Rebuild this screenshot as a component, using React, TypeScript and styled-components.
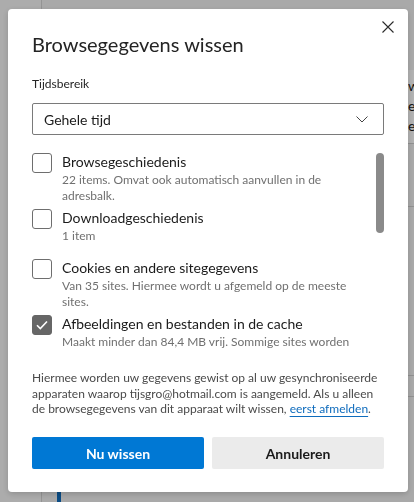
import styled, { createGlobalStyle } from "styled-components";

const GlobalStyle = createGlobalStyle`
  html, body {
    margin: 0;
    padding: 0;
    height: 100%;
    overflow: hidden;
  }
  body {
    font-family: Lato, "Noto Sans", Arial, sans-serif;
    color: #1b1b1b;
  }
`;

/* ---------- dimmed page behind the dialog ---------- */

const Page = styled.div`
  display: flex;
  height: 100vh;
  background: #f3f3f3;
`;

const Sidebar = styled.div`
  width: 41px;
  flex: none;
  background: #f7f7f7;
  border-right: 1px solid #d4d4d4;
`;

const Main = styled.div`
  flex: 1;
  display: flex;
  flex-direction: column;
  padding: 70px 0 0 15px;
`;

// only the start of these lines peeks out to the right of the dialog
const Card = styled.div`
  background: #ffffff;
  border-bottom: 1px solid #d0d0d0;
  padding: 6px 0 7px 351px;
  font-size: 14px;
  line-height: 20px;
  white-space: nowrap;
  color: #1b1b1b;
`;

const PageRow = styled.div<{ $height: number; $accent?: boolean }>`
  height: ${({ $height }) => $height}px;
  flex: none;
  border-bottom: 1px solid #d0d0d0;
  border-left: ${({ $accent }) => ($accent ? "4px solid #0f6cbd" : "none")};
`;

const Progress = styled.div`
  height: 3px;
  margin: 17px 0 0 auto;
  width: 40px;
  background: #0f6cbd;
`;

const Backdrop = styled.div`
  position: fixed;
  inset: 0;
  background: rgba(0, 0, 0, 0.3);
`;

/* ---------- dialog ---------- */

const Dialog = styled.div`
  position: fixed;
  left: 8px;
  top: 9px;
  width: 400px;
  height: 483px;
  box-sizing: border-box;
  padding: 21px 24px 23px;
  background: #ffffff;
  border-radius: 4px;
  box-shadow: 0 2px 6px rgba(0, 0, 0, 0.18);
  display: flex;
  flex-direction: column;
  & > * {
    flex-shrink: 0;
  }
`;

const CloseButton = styled.button`
  position: absolute;
  top: 12px;
  right: 14px;
  width: 12px;
  height: 12px;
  padding: 0;
  border: none;
  background: none;
  display: flex;
  cursor: pointer;
`;

const Title = styled.h1`
  margin: 0;
  font-size: 20px;
  line-height: 28px;
  font-weight: 400;
  color: #242424;
`;

const FieldLabel = styled.div`
  margin-top: 18px;
  font-size: 12px;
  line-height: 16px;
  color: #242424;
`;

const Select = styled.div`
  margin-top: 11px;
  height: 32px;
  box-sizing: border-box;
  border: 1px solid #7a7a7a;
  border-radius: 2px;
  padding: 0 15px 0 11px;
  display: flex;
  align-items: center;
  justify-content: space-between;
  font-size: 14px;
  color: #1b1b1b;
`;

const ListArea = styled.div`
  margin-top: 18px;
  height: 198px;
  display: flex;
  gap: 8px;
`;

const List = styled.div`
  flex: 1;
  overflow: hidden;
  padding-right: 8px;
`;

const ScrollTrack = styled.div`
  width: 8px;
  flex: none;
`;

const ScrollThumb = styled.div`
  height: 80px;
  border-radius: 4px;
  background: #8a8a8a;
`;

const Item = styled.div`
  display: flex;
  gap: 10px;
  min-height: 45px;
  margin-bottom: 5px;
`;

const Box = styled.span<{ $checked?: boolean }>`
  width: 20px;
  height: 20px;
  flex: none;
  box-sizing: border-box;
  border-radius: 3px;
  border: 1px solid ${({ $checked }) => ($checked ? "#666666" : "#6e6e6e")};
  background: ${({ $checked }) => ($checked ? "#666666" : "#ffffff")};
  display: flex;
  align-items: center;
  justify-content: center;
`;

const ItemText = styled.div`
  display: flex;
  flex-direction: column;
`;

const ItemTitle = styled.div`
  font-size: 14px;
  line-height: 18px;
  color: #1b1b1b;
`;

const ItemDesc = styled.div`
  margin-top: 1px;
  font-size: 12px;
  line-height: 16px;
  color: #707070;
`;

const Info = styled.p`
  margin: 19px 0 0;
  font-size: 12px;
  line-height: 15.5px;
  color: #4a4a4a;
  white-space: nowrap;
`;

const Link = styled.a`
  color: #0f6cbd;
  text-decoration: underline;
  text-underline-offset: 3px;
`;

const Actions = styled.div`
  margin-top: auto;
  display: grid;
  grid-template-columns: 1fr 1fr;
  gap: 8px;
`;

const Button = styled.button<{ $primary?: boolean }>`
  height: 32px;
  border: none;
  border-radius: 2px;
  font-family: inherit;
  font-size: 14px;
  font-weight: 700;
  background: ${({ $primary }) => ($primary ? "#0078d4" : "#ebebeb")};
  color: ${({ $primary }) => ($primary ? "#ffffff" : "#1b1b1b")};
`;

const items = [
  {
    title: "Browsegeschiedenis",
    desc: "22 items. Omvat ook automatisch aanvullen in de adresbalk.",
  },
  { title: "Downloadgeschiedenis", desc: "1 item" },
  {
    title: "Cookies en andere sitegegevens",
    desc: "Van 35 sites. Hiermee wordt u afgemeld op de meeste sites.",
  },
  {
    title: "Afbeeldingen en bestanden in de cache",
    desc: "Maakt minder dan 84,4 MB vrij. Sommige sites worden mogelijk langzamer geladen.",
    checked: true,
  },
];

const Check = () => (
  <svg width="12" height="10" viewBox="0 0 12 10" fill="none">
    <path d="M1 5.2 4.3 8.5 11 1.5" stroke="#fff" strokeWidth="1.6" />
  </svg>
);

const App = () => {
  return (
    <>
      <GlobalStyle />
      <Page>
        <Sidebar />
        <Main>
          <Card>
            <div>wijzigen</div>
            <div>ervaring</div>
            <div>eigen</div>
          </Card>
          <PageRow $height={62} />
          <PageRow $height={168} />
          <PageRow $height={20}>
            <Progress />
          </PageRow>
          <PageRow $height={120} $accent />
        </Main>
      </Page>
      <Backdrop />
      <Dialog role="dialog">
        <CloseButton aria-label="Sluiten">
          <svg width="12" height="12" viewBox="0 0 12 12">
            <path d="M0.5 0.5 11.5 11.5M11.5 0.5 0.5 11.5" stroke="#2b2b2b" strokeWidth="1.1" />
          </svg>
        </CloseButton>
        <Title>Browsegegevens wissen</Title>
        <FieldLabel>Tijdsbereik</FieldLabel>
        <Select>
          <span>Gehele tijd</span>
          <svg width="12" height="7" viewBox="0 0 12 7">
            <path d="M0.5 0.5 6 6 11.5 0.5" stroke="#444" strokeWidth="1" fill="none" />
          </svg>
        </Select>
        <ListArea>
          <List>
            {items.map((it) => (
              <Item key={it.title}>
                <Box $checked={it.checked}>{it.checked && <Check />}</Box>
                <ItemText>
                  <ItemTitle>{it.title}</ItemTitle>
                  <ItemDesc>{it.desc}</ItemDesc>
                </ItemText>
              </Item>
            ))}
          </List>
          <ScrollTrack>
            <ScrollThumb />
          </ScrollTrack>
        </ListArea>
        <Info>
          Hiermee worden uw gegevens gewist op al uw gesynchroniseerde
          <br />
          apparaten waarop tijsgro@hotmail.com is aangemeld. Als u alleen
          <br />
          de browsegegevens van dit apparaat wilt wissen, <Link href="#">eerst afmelden</Link>.
        </Info>
        <Actions>
          <Button $primary>Nu wissen</Button>
          <Button>Annuleren</Button>
        </Actions>
      </Dialog>
    </>
  );
};

export default App;
